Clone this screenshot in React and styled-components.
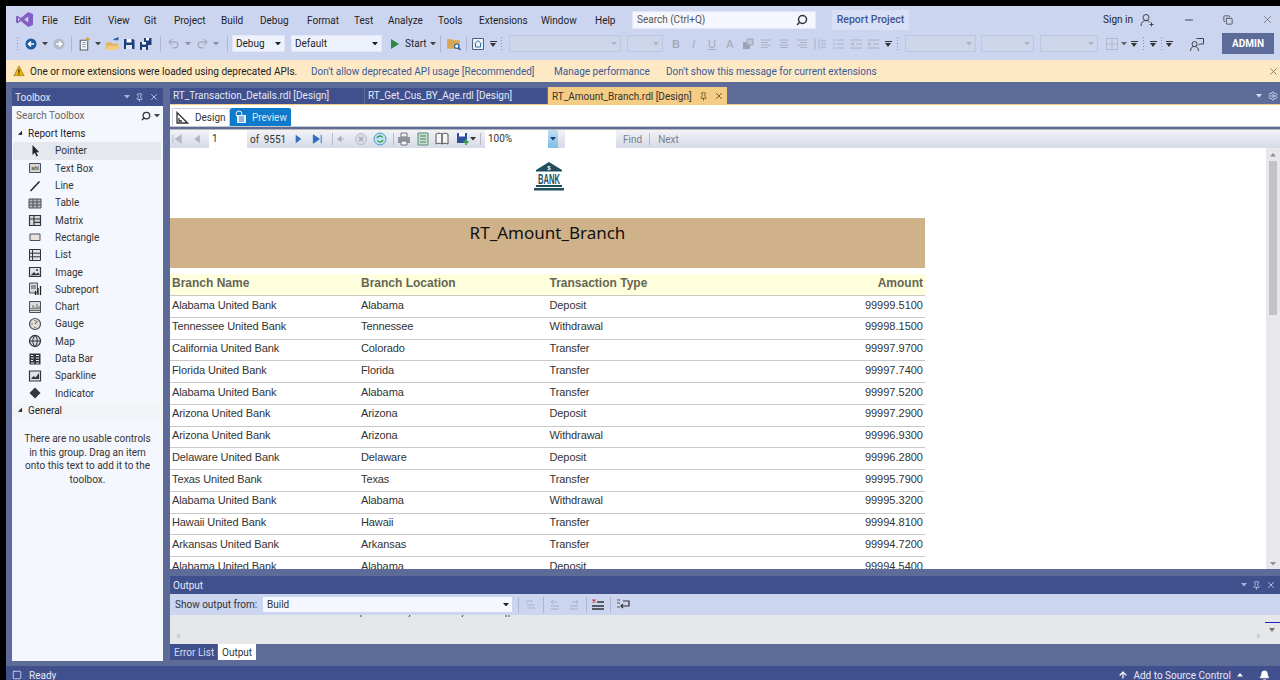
import React from 'react'
import styled, { createGlobalStyle } from 'styled-components'
import { Undo2, Redo2, Search, Pin, X, Minus, Settings, Bell, ArrowUp, Square, Copy } from 'lucide-react'

const ui = 'Roboto, "Noto Sans", sans-serif'

const GlobalStyle = createGlobalStyle`
  html, body { margin: 0; padding: 0; background: #000; overflow: hidden; }
  body { font-family: ${ui}; font-size: 10px; }
  * { box-sizing: border-box; }
`

const menus = [
  ['File', 32], ['Edit', 34], ['View', 36], ['Git', 30], ['Project', 47], ['Build', 39], ['Debug', 47],
  ['Format', 47], ['Test', 34], ['Analyze', 50], ['Tools', 41], ['Extensions', 62], ['Window', 54], ['Help', 37],
]

const rows = [
  ['Alabama United Bank', 'Alabama', 'Deposit', '99999.5100'],
  ['Tennessee United Bank', 'Tennessee', 'Withdrawal', '99998.1500'],
  ['California United Bank', 'Colorado', 'Transfer', '99997.9700'],
  ['Florida United Bank', 'Florida', 'Transfer', '99997.7400'],
  ['Alabama United Bank', 'Alabama', 'Transfer', '99997.5200'],
  ['Arizona United Bank', 'Arizona', 'Deposit', '99997.2900'],
  ['Arizona United Bank', 'Arizona', 'Withdrawal', '99996.9300'],
  ['Delaware United Bank', 'Delaware', 'Deposit', '99996.2800'],
  ['Texas United Bank', 'Texas', 'Transfer', '99995.7900'],
  ['Alabama United Bank', 'Alabama', 'Withdrawal', '99995.3200'],
  ['Hawaii United Bank', 'Hawaii', 'Transfer', '99994.8100'],
  ['Arkansas United Bank', 'Arkansas', 'Transfer', '99994.7200'],
  ['Alabama United Bank', 'Alabama', 'Deposit', '99994.5400'],
]

/* ---------- little drawn icons ---------- */

const Ico = ({ s = 14, children, ...rest }) => (
  <svg width={s} height={s} viewBox="0 0 14 14" {...rest}>{children}</svg>
)

const Tri = ({ c = '#444', down = true }) => (
  <svg width="6" height="3.500" viewBox="0 0 7 4">
    <path d={down ? 'M0 0h7L3.500 4z' : 'M0 4h7L3.500 0z'} fill={c} />
  </svg>
)

const Circle = ({ c, arrow = 'M10 7H4.500M7 4.500 4.500 7 7 9.500' }) => (
  <Ico><circle cx="7" cy="7" r="5.500" fill={c} /><path d={arrow} stroke="#fff" strokeWidth="1.600" fill="none" /></Ico>
)

const Floppy = ({ c = '#1d3f7c' }) => (
  <Ico><path d="M2 2h9l1.500 1.500V12H2z" fill={c} /><path d="M4.500 2h5v3.500h-5z" fill="#fff" /><path d="M4 8h6v4H4z" fill="#dfe6f5" /></Ico>
)

const SaveAll = () => (
  <Ico>
    <path d="M5 1h7.500v7H5z" fill="#1d3f7c" /><path d="M7 1h3v2.500H7z" fill="#fff" />
    <path d="M1 5h8v8H1z" fill="#1d3f7c" /><path d="M3 5h4v2.500H3z" fill="#fff" /><path d="M3 10h4v3H3z" fill="#dfe6f5" />
  </Ico>
)

const NewProject = () => (
  <Ico s={15}>
    <path d="M3 4h7v9H3z" fill="#f4f6fb" stroke="#56606e" />
    <path d="M5 6h3M5 8h3M5 10h3" stroke="#8a93a3" />
    <path d="M10 0.500l.8 1.700 1.700.8-1.700.8-.8 1.700-.8-1.700L7.500 3l1.700-.8z" fill="#d9a520" />
  </Ico>
)

const OpenFolder = () => (
  <Ico s={15}>
    <path d="M1 6h5l1 1h5v6H1z" fill="#e0b45c" />
    <path d="M2 9h12l-2 4H1z" fill="#f0cc80" />
    <path d="M8 4c1-2 3-2 4-1M12 1v2.500H9.500" stroke="#1d5aa0" fill="none" />
  </Ico>
)

const FolderFind = () => (
  <Ico s={15}>
    <path d="M1 3h5l1 1h6v8H1z" fill="#d8a850" />
    <circle cx="10" cy="9.500" r="2" fill="#fff" stroke="#1d5aa0" />
    <path d="M11.500 11l2 2" stroke="#1d5aa0" strokeWidth="1.300" />
  </Ico>
)

const HomeBox = () => (
  <Ico>
    <path d="M1.500 1.500h11v11h-11z" fill="#eef1f8" stroke="#55607a" />
    <path d="M3.500 7 7 3.500 10.500 7M4.500 7v3h5V7" stroke="#2a6fb0" fill="none" />
  </Ico>
)

const Lines = ({ d, c = '#aab0c0' }) => <Ico><path d={d} stroke={c} fill="none" /></Ico>

const ChatUser = () => (
  <svg width="16" height="16" viewBox="0 0 16 16">
    <path d="M7.500 2.500h7v5.500h-4l-1.500 1.500" stroke="#444" fill="none" />
    <circle cx="5.500" cy="8" r="2.500" fill="#ccd5f0" stroke="#444" />
    <path d="M1.500 15c0-3 1.500-4.500 4-4.500s4 1.500 4 4.500" stroke="#444" fill="none" />
  </svg>
)

const UserAdd = () => (
  <Ico s={14}>
    <circle cx="6" cy="4.500" r="3" fill="none" stroke="#444" />
    <path d="M1 13c0-3.500 2-5.500 5-5.500 1.500 0 3 .7 4 2M11.500 9.500v4M9.500 11.500h4" stroke="#444" fill="none" />
  </Ico>
)

const VsLogo = () => (
  <svg width="17" height="15" viewBox="0 0 17 15">
    <path d="M12.200 0 17 2v11l-4.800 2-7.400-6-3 2.300L0 10.500v-6l1.800-.8 3 2.300zM12.200 4.500 8.300 7.500l3.900 3zM2 5.700v3.600l1.900-1.800z" fill="#865fc5" />
  </svg>
)

const Warning = () => (
  <Ico s={12}><path d="M7 1 13 12.500H1z" fill="#f0b400" stroke="#6b5000" strokeWidth=".5" /><path d="M7 5v4M7 10v1.500" stroke="#222" strokeWidth="1.300" /></Ico>
)

const box = '#4a4f5c'
const toolboxIcons = {
  Pointer: <path d="M4.500 1v10l2.300-2.200 1.700 3.700 1.500-.7-1.700-3.500h3z" fill="#222" />,
  'Text Box': <><path d="M1.500 2.500h11v9h-11z" fill="#d9d6d2" stroke={box} /><text x="7" y="9" fontSize="5.500" textAnchor="middle" fontFamily="Liberation Sans" fill="#222">abl</text></>,
  Line: <path d="M2.500 12 11.500 2.500" stroke="#222" strokeWidth="1.500" />,
  Table: <path d="M1 3h12v9H1zM1 6h12M1 9h12M5 3v9M9 3v9" fill="#bbb" stroke={box} />,
  Matrix: <path d="M1.500 2.500h11v10h-11zM1.500 6h11M6 2.500v10M6 9.300h6.500" fill="#d9d9d9" stroke="#33363f" strokeWidth="1.200" />,
  Rectangle: <path d="M2 4h10v6.500H2z" fill="#e8e2da" stroke={box} />,
  List: <path d="M1.500 1.500h11v11h-11zM1.500 5.200h11M1.500 8.800h11M4.500 1.500v11" fill="#e3e3e3" stroke="#33363f" />,
  Image: <><path d="M1.500 2.500h11v9h-11z" fill="#e3e3e3" stroke="#33363f" strokeWidth="1.200" /><path d="M2.500 10.500 6 7l2 2 2-1.500 2 2.500z" fill="#33363f" /><circle cx="9" cy="5" r="1" fill="#33363f" /></>,
  Subreport: <><path d="M1.500 1h8v10h-8z" fill="#d9d9d9" stroke={box} /><path d="M3 4h5M3 6h5" stroke={box} /><path d="M10 6v7M12.500 4v9M7.500 9v4" stroke="#222" strokeWidth="1.300" /></>,
  Chart: <><path d="M1.500 1.500h11v11h-11z" fill="#dcdcdc" stroke={box} /><path d="M3 11V8M5 11V5M7 11V7M9 11V4M11 11V6" stroke="#222" strokeDasharray="1 .8" strokeWidth="1.200" /></>,
  Gauge: <><circle cx="7" cy="7" r="5.500" fill="#e4dcd2" stroke={box} strokeWidth="1.200" /><path d="M7 7l2.500-3M3.500 7h1M7 3v1M7 10v1" stroke="#33363f" /></>,
  Map: <><circle cx="7" cy="7" r="5.500" fill="#d9d9d9" stroke="#33363f" strokeWidth="1.300" /><path d="M1.500 7h11M7 1.500c-3 3-3 8 0 11M7 1.500c3 3 3 8 0 11" fill="none" stroke="#33363f" /></>,
  'Data Bar': <><path d="M1.500 1.500h11v11h-11z" fill="#33363f" /><path d="M3 3.500h2M3 6h3M3 8.500h2M3 11h3M8 3.500h3M8 6h3M8 8.500h3M8 11h3" stroke="#eee" /></>,
  Sparkline: <><path d="M1.500 2h11v10h-11z" fill="#e3e3e3" stroke="#33363f" strokeWidth="1.200" /><path d="M3 10l2.500-3 2 1.500L11 4v6z" fill="#33363f" /></>,
  Indicator: <path d="M7 1.500 12.500 7 7 12.500 1.500 7z" fill="#33363f" />,
}

const Tool = ({ name }) => <Ico>{toolboxIcons[name]}</Ico>

/* ---------- page ---------- */

export default function App() {
  return (
    <Screen>
      <GlobalStyle />
      <Window>
        <TitleBar>
          <LogoSlot><VsLogo /></LogoSlot>
          {menus.map(([label, w]) => <MenuItem key={label} $w={w}>{label}</MenuItem>)}
          <GlobalSearch>
            Search (Ctrl+Q)
            <Search size={12} strokeWidth={3} color="#333" />
          </GlobalSearch>
          <ProjectChip>Report Project</ProjectChip>
          <Spring />
          <SignIn>Sign in</SignIn>
          <Slot $w={14}><UserAdd /></Slot>
          <Slot $w={22} />
          <Slot $w={26}><Minus size={12} color="#444" /></Slot>
          <Slot $w={52}><Copy size={10} color="#444" /></Slot>
          <Slot $w={26}><X size={13} strokeWidth={1} color="#444" /></Slot>
        </TitleBar>

        <MainToolbar>
          <Slot $w={10} />
          <Grip />
          <Slot $w={4} />
          <Slot $w={14}><Circle c="#1e5a9e" /></Slot>
          <Slot $w={14}><Tri /></Slot>
          <Slot $w={13}><Circle c="#b3b9c7" arrow="M4 7h5.500M7 4.500 9.500 7 7 9.500" /></Slot>
          <Slot $w={13}><Sep /></Slot>
          <Slot $w={13}><NewProject /></Slot>
          <Slot $w={13}><Tri /></Slot>
          <Slot $w={16}><OpenFolder /></Slot>
          <Slot $w={18}><Floppy /></Slot>
          <Slot $w={16}><SaveAll /></Slot>
          <Slot $w={12}><Sep /></Slot>
          <Slot $w={14}><Undo2 size={13} color="#a2a8b8" /></Slot>
          <Slot $w={15}><Tri c="#8a90a0" /></Slot>
          <Slot $w={14}><Redo2 size={13} color="#a2a8b8" /></Slot>
          <Slot $w={13}><Tri c="#8a90a0" /></Slot>
          <Slot $w={10}><Sep /></Slot>
          <Combo $w={53}>Debug<Tri c="#222" /></Combo>
          <Slot $w={6} />
          <Combo $w={91}>Default<Tri c="#222" /></Combo>
          <Slot $w={6} />
          <Slot $w={14}><svg width="8" height="10" viewBox="0 0 8 10"><path d="M0 0l8 5-8 5z" fill="#2b8a3e" /></svg></Slot>
          <StartLabel>Start</StartLabel>
          <Slot $w={10}><Tri /></Slot>
          <Slot $w={5}><Sep /></Slot>
          <Slot $w={20}><FolderFind /></Slot>
          <Slot $w={6}><Sep /></Slot>
          <Slot $w={18}><HomeBox /></Slot>
          <Slot $w={12}><Drop /></Slot>
          <Slot $w={6}><Grip /></Slot>
          <Slot $w={4} />
          <Combo $w={112} $off><Tri c="#aeb4c2" /></Combo>
          <Slot $w={6} />
          <Combo $w={36} $off><Tri c="#aeb4c2" /></Combo>
          <Slot $w={5} />
          <Glyph $w={16} $bold>B</Glyph>
          <Glyph $w={19} $italic>I</Glyph>
          <Glyph $w={18} $under>U</Glyph>
          <Glyph $w={18}>A</Glyph>
          <Slot $w={18}><Ico><path d="M2 5h7v7H2z" fill="#9aa2b4" /><path d="M6 2h6v6H6z" fill="#c0c6d4" stroke="#9aa2b4" /></Ico></Slot>
          <Slot $w={18}><Lines d="M2 3h10M2 5.500h7M2 8h10M2 10.500h7" /></Slot>
          <Slot $w={18}><Lines d="M2 3h10M3.500 5.500h7M2 8h10M3.500 10.500h7" /></Slot>
          <Slot $w={18}><Lines d="M2 3h10M5 5.500h7M2 8h10M5 10.500h7" /></Slot>
          <Slot $w={18}><Lines d="M2 2v10M6 2v10M8 4h5M8 7h5M8 10h5" /></Slot>
          <Slot $w={17}><Lines d="M2 3h2M2 7h2M2 11h2M6 3h7M6 7h7M6 11h7" /></Slot>
          <Slot $w={19}><Lines d="M1 3h12M1 11h12M7 7h6M1 7h3M4 5v4" /></Slot>
          <Slot $w={16}><Lines d="M1 3h12M1 11h12M7 7h6M1 7h3M3 5l2 2-2 2" /></Slot>
          <Slot $w={14}><Drop /></Slot>
          <Slot $w={6}><Grip /></Slot>
          <Slot $w={4} />
          <Combo $w={71} $off><Tri c="#aeb4c2" /></Combo>
          <Slot $w={5} />
          <Combo $w={53} $off><Tri c="#aeb4c2" /></Combo>
          <Slot $w={6} />
          <Combo $w={58} $off><Tri c="#aeb4c2" /></Combo>
          <Slot $w={6} />
          <Slot $w={16}><Lines d="M1.500 1.500h11v11h-11zM7 1.500v11M1.500 7h11" c="#b4bac8" /></Slot>
          <Slot $w={8}><Tri c="#666" /></Slot>
          <Slot $w={12}><Drop /></Slot>
          <Slot $w={8}><Grip /></Slot>
          <Slot $w={10}><Drop /></Slot>
          <Slot $w={8}><Grip /></Slot>
          <Slot $w={7}><Drop /></Slot>
          <Slot $w={16} />
          <Slot $w={16}><ChatUser /></Slot>
          <Slot $w={17} />
          <AdminButton>ADMIN</AdminButton>
        </MainToolbar>

        <InfoBar>
          <Slot $w={12}><Warning /></Slot>
          <InfoText>One or more extensions were loaded using deprecated APIs.</InfoText>
          <InfoLink $w={243}>Don't allow deprecated API usage [Recommended]</InfoLink>
          <InfoLink $w={112}>Manage performance</InfoLink>
          <InfoLink>Don't show this message for current extensions</InfoLink>
          <Spring />
          <X size={11} color="#8a7a50" />
        </InfoBar>

        <Workspace>
          <Toolbox>
            <PanelHeader>
              <span>Toolbox</span>
              <PanelControls>
                <Tri c="#a8b4d8" />
                <Pin size={9} color="#c8d2ec" />
                <X size={10} color="#c8d2ec" />
              </PanelControls>
            </PanelHeader>
            <ToolboxSearch>
              Search Toolbox
              <Spring />
              <Search size={10} strokeWidth={3} color="#333" />
              <Tri />
            </ToolboxSearch>
            <Section>
              <Tri c="#333" />
              Report Items
            </Section>
            {Object.keys(toolboxIcons).map(name => (
              <ToolRow key={name} $active={name === 'Pointer'}>
                <ToolIcon><Tool name={name} /></ToolIcon>
                {name}
              </ToolRow>
            ))}
            <Section $shaded>
              <Tri c="#333" />
              General
            </Section>
            <EmptyNote>
              There are no usable controls<br />
              in this group. Drag an item<br />
              onto this text to add it to the<br />
              toolbox.
            </EmptyNote>
          </Toolbox>

          <DocColumn>
            <TabStrip>
              <DocTab $w={195}>RT_Transaction_Details.rdl [Design]</DocTab>
              <DocTab $w={183}>RT_Get_Cus_BY_Age.rdl [Design]</DocTab>
              <ActiveTab>
                <ActiveTabLabel>RT_Amount_Branch.rdl [Design]</ActiveTabLabel>
                <Pin size={9} color="#5a4a20" />
                <X size={10} color="#5a4a20" />
              </ActiveTab>
              <Spring />
              <Tri c="#d8e0f5" />
              <Settings size={10} color="#d8e0f5" />
            </TabStrip>

            <DesignerTabs>
              <DesignTab>
                <Ico><path d="M2 1.500v10.500h10.500zM4 7v3h3" fill="none" stroke="#333" strokeWidth="1.300" /></Ico>
                Design
              </DesignTab>
              <PreviewTab>
                <Ico><path d="M3 5h9v8H3z" fill="#e8f0fa" /><circle cx="5" cy="4" r="3" fill="none" stroke="#e8f0fa" /><path d="M5 7h5M5 9h5M5 11h5" stroke="#3a7bbd" /></Ico>
                Preview
              </PreviewTab>
            </DesignerTabs>

            <ReportToolbar>
              <Slot $w={15}><Ico s={13}><path d="M2 2v9M11 2v9L4.500 6.500z" fill="#b6bac4" stroke="#b6bac4" /></Ico></Slot>
              <Slot $w={24}><Ico s={13}><path d="M9.500 2v9L3.500 6.500z" fill="#b0b4be" /></Ico></Slot>
              <PageInput $w={38}>1</PageInput>
              <PageCount>of <b>9551</b></PageCount>
              <Slot $w={14}><Ico s={13}><path d="M4 2v9l6-4.500z" fill="#2c6fc0" /></Ico></Slot>
              <Slot $w={24}><Ico s={13}><path d="M11 2v9M2.500 2v9L9 6.500z" fill="#2c6fc0" stroke="#2c6fc0" /></Ico></Slot>
              <Slot $w={6}><ThinSep /></Slot>
              <Slot $w={12}><Ico s={12}><path d="M11 7H6M7 4 3 7l4 3z" fill="#a8adb8" stroke="#a8adb8" /></Ico></Slot>
              <Slot $w={28}><Ico><circle cx="7" cy="7" r="5.500" fill="#dadde3" stroke="#b8bcc6" /><path d="M5 5l4 4M9 5l-4 4" stroke="#a2a7b2" strokeWidth="1.300" /></Ico></Slot>
              <Slot $w={10}><Ico><circle cx="7" cy="7" r="6" fill="#bfe0f2" stroke="#4a9cc8" /><path d="M4 6c.5-2 4-3 5.500-.5M10 8c-.5 2-4 3-5.500.5" stroke="#2f9a46" strokeWidth="1.300" fill="none" /></Ico></Slot>
              <Slot $w={3} />
              <Slot $w={10}><ThinSep /></Slot>
              <Slot $w={12}><Ico><path d="M4 1h6v4H4z" fill="#eee" stroke="#777" /><path d="M1 5h12v6H1z" fill="#8d929c" /><path d="M4 9h6v4H4z" fill="#f4f4f4" stroke="#777" /></Ico></Slot>
              <Slot $w={5} />
              <Slot $w={16}><Ico><path d="M2 1h10v12H2z" fill="#c5e0cc" stroke="#5c8a70" /><path d="M4 4h6M4 7h6M4 10h6" stroke="#507a62" /></Ico></Slot>
              <Slot $w={3} />
              <Slot $w={16}><Ico><path d="M1 2c2-1 4-1 6 0v10c-2-1-4-1-6 0zM7 2c2-1 4-1 6 0v10c-2-1-4-1-6 0z" fill="#f6f6f6" stroke="#555" /></Ico></Slot>
              <Slot $w={5} />
              <Slot $w={16}><Ico><path d="M1 1h10v10H1z" fill="#2d4f9c" /><path d="M3 1h6v3.500H3z" fill="#fff" /><path d="M10 7v6M7.500 10h5" stroke="#33a04a" strokeWidth="1.800" /></Ico></Slot>
              <Slot $w={4}><Tri c="#333" /></Slot>
              <Slot $w={10}><ThinSep /></Slot>
              <ZoomInput>100%</ZoomInput>
              <ZoomDrop><Tri c="#1d3f7c" /></ZoomDrop>
              <FindInput />
              <FindLink $x={7}>Find</FindLink>
              <ThinSep $x={7} />
              <FindLink $x={8}>Next</FindLink>
            </ReportToolbar>

            <ReportPane>
              <ReportScroll>
                <ReportPage>
                  <LogoRow>
                    <svg width="32" height="29" viewBox="0 0 32 29" overflow="visible">
                      <path d="M16 0 29 8v1.500H3V8z" fill="#1f4e5f" />
                      <text x="16" y="7.500" fontSize="6" textAnchor="middle" fontFamily="Liberation Sans" fontWeight="700" fill="#fff">$</text>
                      <text x="16" y="21.500" fontSize="14" textAnchor="middle" textLength="22" lengthAdjust="spacingAndGlyphs" fontFamily="Liberation Sans" fontWeight="700" fill="#1f4e5f">BANK</text>
                      <path d="M3 23h26v2H3zM1 26h30v2.500H1z" fill="#1f4e5f" />
                    </svg>
                  </LogoRow>
                  <Banner>RT_Amount_Branch</Banner>
                  <HeaderRow>
                    <span>Branch Name</span>
                    <span>Branch Location</span>
                    <span>Transaction Type</span>
                    <Amount>Amount</Amount>
                  </HeaderRow>
                  {rows.map(([name, loc, type, amount], i) => (
                    <DataRow key={i}>
                      <span>{name}</span>
                      <span>{loc}</span>
                      <span>{type}</span>
                      <Amount>{amount}</Amount>
                    </DataRow>
                  ))}
                </ReportPage>
              </ReportScroll>
              <VScroll>
                <Tri c="#8a8c98" down={false} />
                <VThumb />
                <Spring />
                <Tri c="#8a8c98" />
              </VScroll>
            </ReportPane>

            <OutputHeader>
              Output
              <Spring />
              <Tri c="#a8b4d8" />
              <Pin size={9} color="#c8d2ec" />
              <X size={10} color="#c8d2ec" />
            </OutputHeader>
            <OutputToolbar>
              <OutputLabel>Show output from:</OutputLabel>
              <OutputCombo>Build<Tri c="#222" /></OutputCombo>
              <Slot $w={6}><Sep /></Slot>
              <Slot $w={20}><Lines d="M3 3h6M2 5l2-2M3 7h8M3 10h8" /></Slot>
              <Slot $w={4}><Sep /></Slot>
              <Slot $w={20}><Lines d="M3 8h8M3 11h8M3 4h6M3 4l2-2M3 4l2 2" /></Slot>
              <Slot $w={18}><Lines d="M3 8h8M3 11h8M5 4h6M11 4 9 2M11 4 9 6" /></Slot>
              <Slot $w={6}><Sep /></Slot>
              <Slot $w={18}><Ico><path d="M6 4h7M1 8h12M1 11h12" stroke="#333" strokeWidth="1.300" /><path d="M1.500 1.500l3 3M4.500 1.500l-3 3" stroke="#c4302b" strokeWidth="1.200" /></Ico></Slot>
              <Slot $w={6}><Sep /></Slot>
              <Slot $w={20}>
                <Ico><path d="M7 3h6v5H5M7 6 5 8l2 2" fill="none" stroke="#333" strokeWidth="1.200" /><path d="M1 2h3M1 5h3M1 9h3" stroke="#555" /></Ico>
              </Slot>
            </OutputToolbar>
            <OutputBody>
              <ClippedLine>
                <svg width="150" height="3" viewBox="0 0 150 3">
                  <path d="M1 0v2M50 0l-1 2M103 0l-1 2M146 0v2M149 0v2" stroke="#444" />
                </svg>
              </ClippedLine>
              <HScroll>
                <Tri c="#c8cad0" down={false} />
                <Tri c="#c8cad0" down={false} />
              </HScroll>
              <OutputCaret />
            </OutputBody>
            <OutputTabs>
              <ErrorTab>Error List</ErrorTab>
              <OutputTab>Output</OutputTab>
            </OutputTabs>
          </DocColumn>
        </Workspace>

        <StatusBar>
          <Square size={10} color="#d8e0f5" />
          <StatusReady>Ready</StatusReady>
          <Spring />
          <ArrowUp size={10} color="#fff" strokeWidth={3} />
          <span>Add to Source Control</span>
          <Tri c="#fff" down={false} />
          <Bell size={11} color="#fff" fill="#fff" />
        </StatusBar>
      </Window>
    </Screen>
  )
}

const Screen = styled.div`
  width: 1280px;
  height: 680px;
  padding: 6px 0 0 6px;
  background: #000;
  overflow: hidden;
`

const Window = styled.div`
  width: 1274px;
  height: 674px;
  display: flex;
  flex-direction: column;
  background: #5d6b99;
  color: #1e1e1e;
`

const Spring = styled.div`
  flex: 1;
`

const Slot = styled.div`
  width: ${p => p.$w}px;
  flex: none;
  display: flex;
  align-items: center;
  justify-content: center;
  svg { flex: none; }
`

const TitleBar = styled.div`
  height: 27px;
  flex: none;
  display: flex;
  align-items: center;
  background: #ccd5f0;
`

const LogoSlot = styled.div`
  width: 36px;
  padding-left: 10px;
  flex: none;
  display: flex;
`

const MenuItem = styled.div`
  width: ${p => p.$w}px;
  padding-top: 1px;
  flex: none;
  white-space: nowrap;
`

const GlobalSearch = styled.div`
  width: 184px;
  height: 18px;
  flex: none;
  padding: 0 7px 0 4px;
  display: flex;
  align-items: center;
  justify-content: space-between;
  background: #f5f7fe;
  border: 1px solid #e2e7f6;
  color: #555;
  svg { transform: scaleX(-1); }
`

const ProjectChip = styled.div`
  width: 77px;
  height: 20px;
  margin-left: 16px;
  flex: none;
  display: flex;
  align-items: center;
  justify-content: center;
  background: #d9e0f5;
  color: #3f5590;
  font-size: 10.500px;
  font-weight: 500;
  white-space: nowrap;
`

const SignIn = styled.div`
  margin-right: 7px;
  white-space: nowrap;
`

const MainToolbar = styled.div`
  height: 27px;
  padding-bottom: 6px;
  flex: none;
  display: flex;
  align-items: center;
  background: #ccd5f0;
`

const Grip = styled.div`
  width: 4px;
  height: 15px;
  flex: none;
  background-image: radial-gradient(circle, #8d94aa 0.8px, transparent 0.9px);
  background-size: 3px 3px;
`

const Sep = styled.div`
  width: 1px;
  height: 16px;
  flex: none;
  background: #aeb6d0;
`

const Drop = styled.div`
  width: 7px;
  height: 5px;
  flex: none;
  border-top: 1px solid #333;
  position: relative;
  &::after {
    content: '';
    position: absolute;
    left: 0;
    top: 1px;
    border: 3.500px solid transparent;
    border-top: 4px solid #333;
    border-bottom: 0;
  }
`

const Combo = styled.div`
  width: ${p => p.$w}px;
  height: 17px;
  flex: none;
  padding: 0 3px 0 3px;
  display: flex;
  align-items: center;
  justify-content: ${p => (p.$off ? 'flex-end' : 'space-between')};
  background: ${p => (p.$off ? '#ccd5ea' : '#eef2fc')};
  border: 1px solid ${p => (p.$off ? '#bcc6de' : '#e2e8f8')};
`

const StartLabel = styled.div`
  width: 26px;
  padding-left: 3px;
  flex: none;
`

const Glyph = styled.div`
  width: ${p => p.$w}px;
  flex: none;
  text-align: center;
  color: #a2a9bb;
  font-family: "Liberation Sans", sans-serif;
  font-size: 11px;
  font-weight: ${p => (p.$bold ? 700 : 400)};
  font-style: ${p => (p.$italic ? 'italic' : 'normal')};
  text-decoration: ${p => (p.$under ? 'underline' : 'none')};
`

const AdminButton = styled.button`
  width: 52px;
  height: 21px;
  flex: none;
  border: 0;
  padding: 0;
  background: #5d6b99;
  color: #fff;
  font-family: ${ui};
  font-size: 10px;
  font-weight: 700;
`

const InfoBar = styled.div`
  height: 22px;
  flex: none;
  padding: 0 1px 0 7px;
  display: flex;
  align-items: center;
  background: #fde9c3;
`

const InfoText = styled.div`
  width: 281px;
  margin-left: 5px;
  flex: none;
  white-space: nowrap;
`

const InfoLink = styled.a`
  width: ${p => (p.$w ? `${p.$w}px` : 'auto')};
  flex: none;
  color: #3a5a9a;
  white-space: nowrap;
`

const Workspace = styled.div`
  flex: 1;
  min-height: 0;
  padding: 6px 0 6px 6px;
  display: flex;
  gap: 7px;
`

const Toolbox = styled.div`
  width: 151px;
  flex: none;
  margin-bottom: -1px;
  background: #f5f7fe;
  display: flex;
  flex-direction: column;
`

const PanelHeader = styled.div`
  height: 18px;
  flex: none;
  padding: 0 4px 0 3px;
  display: flex;
  align-items: center;
  justify-content: space-between;
  background: #40508d;
  color: #e4e9f8;
`

const PanelControls = styled.div`
  display: flex;
  align-items: center;
  gap: 5px;
`

const ToolboxSearch = styled.div`
  height: 19px;
  flex: none;
  padding: 0 3px 0 4px;
  display: flex;
  align-items: center;
  gap: 3px;
  color: #666;
  background: #f5f7fe;
  svg:nth-of-type(1) { transform: scaleX(-1); }
`

const Section = styled.div`
  height: 17.300px;
  flex: none;
  padding-left: 6px;
  display: flex;
  align-items: center;
  gap: 4px;
  background: ${p => (p.$shaded ? '#f3f4f7' : 'transparent')};
  svg { transform: rotate(-45deg); }
`

const ToolRow = styled.div`
  height: 17.300px;
  flex: none;
  margin: 0 2px 0 1px;
  display: flex;
  align-items: center;
  background: ${p => (p.$active ? '#e6e8f0' : 'transparent')};
  color: #333;
`

const ToolIcon = styled.div`
  width: 42px;
  padding-left: 15px;
  flex: none;
  display: flex;
  align-items: center;
`

const EmptyNote = styled.div`
  margin-top: 13px;
  line-height: 13.500px;
  text-align: center;
  color: #333;
`

const DocColumn = styled.div`
  flex: 1;
  min-width: 0;
  display: flex;
  flex-direction: column;
`

const TabStrip = styled.div`
  height: 17px;
  flex: none;
  padding-right: 2px;
  display: flex;
  align-items: flex-start;
  gap: 6px;
  border-bottom: 1px solid #f5cc84;
  svg { align-self: center; }
`

const DocTab = styled.div`
  width: ${p => p.$w}px;
  height: 16px;
  flex: none;
  margin-right: -6px;
  padding-left: 3px;
  background: #40508d;
  border-right: 1px solid #5d6b99;
  color: #e4e9f8;
  line-height: 16px;
  white-space: nowrap;
`

const ActiveTab = styled.div`
  width: 179px;
  height: 18px;
  flex: none;
  margin-top: -1px;
  padding-left: 4px;
  display: flex;
  align-items: center;
  background: #f5cc84;
  color: #333;
  white-space: nowrap;
  svg:last-child { margin-left: 6px; }
`

const ActiveTabLabel = styled.div`
  width: 147px;
  flex: none;
`

const DesignerTabs = styled.div`
  height: 22px;
  flex: none;
  padding: 3px 0 0 2px;
  display: flex;
  background: #fff;
  border-bottom: 1px solid #c8c8c8;
`

const DesignTab = styled.div`
  width: 58px;
  height: 18px;
  flex: none;
  padding-left: 2px;
  display: flex;
  align-items: center;
  gap: 6px;
  border: 1px solid #ccd;
  border-bottom: 0;
  border-radius: 2px 2px 0 0;
  color: #333;
`

const PreviewTab = styled(DesignTab)`
  width: 61px;
  padding-left: 4px;
  border: 0;
  background: #0e7acc;
  color: #d7e9f8;
  gap: 4px;
`

const ReportToolbar = styled.div`
  height: 19px;
  flex: none;
  margin-top: 2px;
  display: flex;
  align-items: center;
  background: linear-gradient(#f1f3f7, #d6dae7);
  border-top: 1px solid #b8b8b8;
  color: #333;
`

const PageInput = styled.div`
  width: ${p => p.$w}px;
  height: 100%;
  flex: none;
  padding-left: 3px;
  background: #fff;
  line-height: 18px;
`

const PageCount = styled.div`
  width: 44px;
  flex: none;
  padding-left: 3px;
  white-space: nowrap;
  b { font-weight: 400; margin-left: 2px; }
`

const ThinSep = styled.div`
  width: 1px;
  height: 12px;
  flex: none;
  margin-left: ${p => p.$x || 0}px;
  background: #b6bac8;
`

const ZoomInput = styled.div`
  width: 63px;
  height: 100%;
  flex: none;
  padding-left: 3px;
  background: #fff;
  line-height: 18px;
`

const ZoomDrop = styled.div`
  width: 10px;
  height: 100%;
  flex: none;
  display: flex;
  align-items: center;
  justify-content: center;
  background: linear-gradient(#bfe0f5, #7fbde6);
`

const FindInput = styled.div`
  width: 51px;
  height: 100%;
  margin-left: 7px;
  flex: none;
  background: #fff;
`

const FindLink = styled.div`
  margin-left: ${p => p.$x}px;
  color: #7a7f8a;
`

const ReportPane = styled.div`
  flex: 1;
  min-height: 0;
  display: flex;
  background: #fff;
`

const ReportScroll = styled.div`
  flex: 1;
  min-width: 0;
  overflow: hidden;
`

const ReportPage = styled.div`
  width: 755px;
  font-family: "Liberation Sans", Arial, sans-serif;
  font-size: 11px;
  color: #333;
`

const LogoRow = styled.div`
  height: 70px;
  padding: 14px 0 0 3px;
  display: flex;
  justify-content: center;
`

const Banner = styled.div`
  height: 50px;
  padding-top: 3px;
  background: #cfb28a;
  color: #111;
  font-family: "Noto Sans", sans-serif;
  font-size: 17px;
  text-align: center;
`

const columns = `
  display: grid;
  grid-template-columns: 189px 188.500px 189px 1fr;
  padding: 0 2px;
`

const HeaderRow = styled.div`
  ${columns}
  height: 22px;
  margin-top: 6px;
  padding-bottom: 3px;
  align-items: center;
  background: #ffffde;
  border-bottom: 1px solid #c8c8c8;
  color: #666655;
  font-size: 12px;
  font-weight: 700;
`

const DataRow = styled.div`
  ${columns}
  height: 21.780px;
  padding-top: 1.500px;
  line-height: 14px;
  letter-spacing: -0.1px;
  border-bottom: 1px solid #c8c8c8;
`

const Amount = styled.span`
  text-align: right;
  letter-spacing: 0;
`

const VScroll = styled.div`
  width: 14px;
  flex: none;
  padding: 5px 0 4px;
  display: flex;
  flex-direction: column;
  align-items: center;
  background: #e8e8ec;
`

const VThumb = styled.div`
  width: 8px;
  height: 154px;
  margin-top: 4px;
  flex: none;
  background: #c2c3c9;
`

const OutputHeader = styled.div`
  height: 18px;
  margin-top: 7px;
  flex: none;
  padding: 0 4px 0 3px;
  display: flex;
  align-items: center;
  gap: 5px;
  background: #40508d;
  color: #e4e9f8;
`

const OutputToolbar = styled.div`
  height: 21px;
  flex: none;
  padding-left: 5px;
  display: flex;
  align-items: center;
  background: #ccd5f0;
  color: #333;
`

const OutputLabel = styled.div`
  width: 88px;
  flex: none;
  white-space: nowrap;
`

const OutputCombo = styled.div`
  width: 249px;
  height: 15px;
  margin-right: 3px;
  padding: 0 3px 0 4px;
  flex: none;
  display: flex;
  align-items: center;
  justify-content: space-between;
  background: #f5f7fe;
`

const OutputBody = styled.div`
  height: 29px;
  flex: none;
  position: relative;
  display: flex;
  flex-direction: column;
  justify-content: space-between;
  background: #e6e7e8;
`

const ClippedLine = styled.div`
  height: 3px;
  padding-left: 190px;
  display: flex;
`

const HScroll = styled.div`
  height: 13px;
  padding: 0 18px 4px 5px;
  display: flex;
  align-items: center;
  justify-content: space-between;
  svg { transform: rotate(-90deg); }
  svg:last-child { transform: rotate(90deg); }
`

const OutputCaret = styled.div`
  position: absolute;
  top: 7px;
  right: 0;
  width: 15px;
  height: 1px;
  background: #2020c0;
  &::after {
    content: '';
    position: absolute;
    left: 4px;
    top: 6px;
    border: 3.500px solid transparent;
    border-top: 4px solid #777;
    border-bottom: 0;
  }
`

const OutputTabs = styled.div`
  height: 16px;
  flex: none;
  display: flex;
  gap: 1px;
`

const ErrorTab = styled.div`
  width: 47px;
  padding-left: 4px;
  background: #40508d;
  color: #d5dcf5;
  line-height: 17px;
  white-space: nowrap;
`

const OutputTab = styled.div`
  width: 38px;
  padding-left: 4px;
  background: #fff;
  color: #333;
  line-height: 17px;
`

const StatusBar = styled.div`
  height: 14px;
  flex: none;
  padding: 4px 10px 0 6px;
  display: flex;
  align-items: center;
  gap: 5px;
  overflow: hidden;
  background: #40508d;
  color: #e4e9f8;
  span { margin-right: 1px; }
  svg:last-child { margin-left: 11px; }
`

const StatusReady = styled.div`
  margin-left: 2px;
`
